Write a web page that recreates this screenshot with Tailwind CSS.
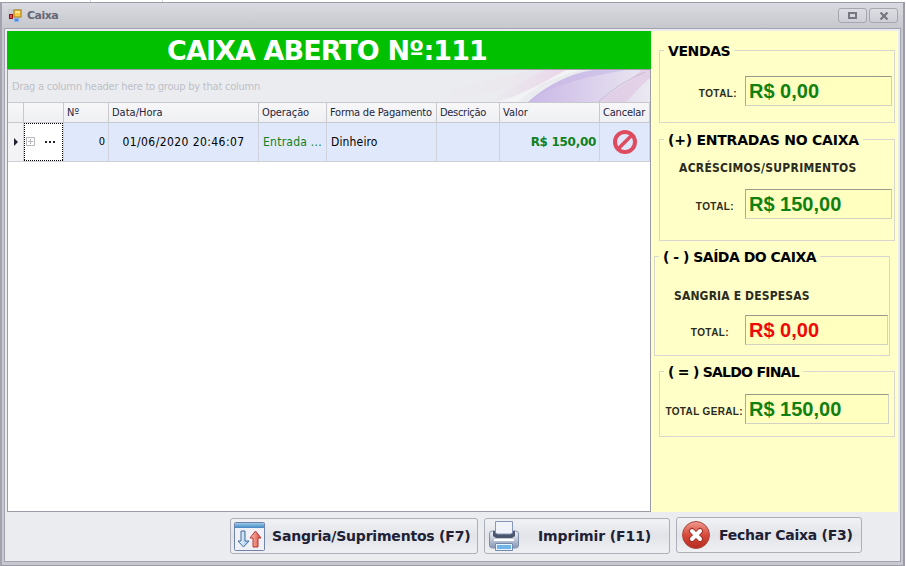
<!DOCTYPE html>
<html lang="pt-BR">
<head>
<meta charset="utf-8">
<title>Caixa</title>
<script src="https://cdn.jsdelivr.net/npm/@tailwindcss/browser@4"></script>
</head>
<body class="h-[566px] w-[906px] overflow-hidden bg-white font-['DejaVu_Sans_Condensed','DejaVu_Sans',sans-serif] whitespace-nowrap text-black">
<div class="flex h-[2px] w-full"><i class="ml-[90px] w-px bg-[#d4d8e4]"></i><i class="ml-[71px] w-px bg-[#d4d8e4]"></i></div>
<div class="flex h-[564px] w-[905px] flex-col border-2 border-t-[1px] border-b-[1px] border-[#9c9ca6] border-l-[#a3a3ad] bg-[#c8c8d0]">
  <!-- title bar -->
  <header class="flex h-[25px] shrink-0 items-center bg-linear-to-b from-[#dadbe0] to-[#c7c8ce] pl-[6px]">
    <svg class="h-[14px] w-[14px]" viewBox="0 0 14 14"><rect width="14" height="14" fill="#c9cbd3"/><rect x="6" y="1" width="7" height="7" fill="#f7c948" stroke="#a67c12"/><path d="M7 2h5v2H7z" fill="#ffe995"/><rect x="1.500" y="5.500" width="3" height="4" fill="#e05050" stroke="#8e1717"/><rect x="6.500" y="9.500" width="4" height="3" fill="#4e87dd" stroke="#8bb0ec"/></svg>
    <h1 class="relative top-[1px] ml-[5px] font-['DejaVu_Sans',sans-serif] text-[11px] font-bold tracking-[-0.5px] text-[#666675]">Caixa</h1>
    <button class="ml-auto flex h-[15px] w-[29px] items-center justify-center rounded-[3px] border border-[#a5a6b0] bg-linear-to-b from-[#dddee3] to-[#cecfd6]"><span class="h-[7px] w-[9px] border-2 border-[#777783]"></span></button>
    <button class="mr-[5px] ml-[2px] flex h-[15px] w-[29px] items-center justify-center rounded-[3px] border border-[#a5a6b0] bg-linear-to-b from-[#dddee3] to-[#cecfd6]"><svg class="h-[8px] w-[10px]" viewBox="0 0 10 8"><path d="M1.500.5l7 7M8.500.5l-7 7" stroke="#777783" stroke-width="2.200"/></svg></button>
  </header>
  <main class="mr-[2px] ml-[2px] flex h-[534px] flex-col border border-[#a3a4b0] bg-[#ebecef]">
    <div class="mt-[2px] ml-[2px] flex h-[481px] w-[891px]">
      <section class="flex w-[644px] shrink-0 flex-col">
        <h2 class="flex h-[38px] items-center justify-center bg-[#00c000] pr-[4px] font-['DejaVu_Sans',sans-serif] text-[27px] font-bold text-white"><span class="relative top-[1px] tracking-[-0.9px]">CAIXA ABERTO Nº:111</span></h2>
        <div class="flex h-[443px] flex-col border border-[#9a9ba3] bg-white">
          <div class="relative flex h-[32px] shrink-0 items-center overflow-hidden bg-[#ebecef] pl-[4px]">
            <svg class="absolute top-0 right-0 h-[32px] w-[230px]" viewBox="0 0 230 32">
              <defs><linearGradient id="a"><stop stop-color="#ebecef"/><stop offset="1" stop-color="#ead6ea"/></linearGradient><linearGradient id="b" x1="0" x2="1"><stop stop-color="#c9b8e7"/><stop offset=".35" stop-color="#d5c8ea"/><stop offset="1" stop-color="#ebe9f1"/></linearGradient></defs>
              <path d="M30 32C90 16 140 7 166 0h-55L20 22z" fill="url(#a)" opacity=".4"/>
              <path d="M68 32C110 25 130 12 148 0h-23C105 10 85 20 68 32z" fill="url(#a)"/>
              <path d="M98 32C118 14 141 4 164 0h-18C129 9 109 22 78 32z" fill="#f2f3f5"/>
              <path d="M108 32C131 11 158 2 174 0h56v32z" fill="url(#b)"/>
              <path d="M108 32C132 15 160 8 206 0h-32C152 3 130 13 108 32z" fill="#c5b4e5" opacity=".55"/>
              <path d="M178 32C194 20 211 11 221 0h9v8c-12 9-18 20-25 24z" fill="#e1cce5" opacity=".8"/>
              <path d="M178 32Q200 12 225 2" fill="none" stroke="#b9aacb" stroke-width=".6"/>
            </svg>
            <span class="relative top-[1px] text-[11px] tracking-[-0.23px] text-[#bec0c8]">Drag a column header here to group by that column</span>
          </div>
          <div class="grid h-[21px] shrink-0 grid-cols-[16px_40px_45px_150px_68px_110px_63px_100px_50px] border-y border-[#c8c9ce] bg-linear-to-b from-[#f7f7f8] to-[#eff0f3] text-[11px] leading-[19px] text-[#25253f] [&>*]:border-r [&>*]:border-[#c8c9ce] [&>*]:pl-[3px]">
            <span></span><span></span><span>Nº</span><span>Data/Hora</span><span class="tracking-[-0.1px]">Operação</span><span class="tracking-[-0.2px]">Forma de Pagamento</span><span class="tracking-[-0.3px]">Descrição</span><span>Valor</span><span class="tracking-[-0.2px]">Cancelar</span>
          </div>
          <div class="grid h-[39px] shrink-0 grid-cols-[16px_40px_45px_150px_68px_110px_63px_100px_50px] border-b border-[#cfd0d5] bg-[#e0e9fb] text-[12px] leading-[38px] [&>*]:border-r [&>*]:border-[#d0d3dc]">
            <span class="flex items-center bg-[#f3f3f5] pl-[6px]"><svg class="h-[8px] w-[4px]" viewBox="0 0 4 8"><path d="M0 0l4 4-4 4z" fill="#222233"/></svg></span>
            <span class="flex items-center bg-white bg-clip-padding"><svg class="h-[38px] w-[39px]" viewBox="0 0 39 38"><path fill="#fff" d="M0 0h39v38H0z"/><path d="M0 .5h39M0 37.500h39M.5 0v38M38.500 0v38" fill="none" stroke="#000" stroke-dasharray="1 1"/><path d="M2.500 14.500h8v8h-8zM4 18.500h5M6.500 16v5" fill="none" stroke="#b8b9c0"/><path d="M21 18h2v2h-2zM25 18h2v2h-2zM29 18h2v2h-2z" fill="#222233"/></svg></span>
            <span class="pr-[3px] text-right text-[11px]">0</span>
            <span class="text-center tracking-[0.42px]">01/06/2020 20:46:07</span>
            <span class="pl-[4px] tracking-[0.25px] text-[#108020]">Entrada ...</span>
            <span class="pl-[4px] tracking-[0.15px]">Dinheiro</span>
            <span></span>
            <span class="pr-[3px] text-right font-['DejaVu_Sans',sans-serif] font-bold tracking-[-0.3px] text-[#108020]">R$ 150,00</span>
            <span class="flex items-center justify-center"><svg class="h-[24px] w-[24px]" viewBox="0 0 24 24"><path d="M5 19L19 5" stroke="#df4b5f" stroke-width="3.500"/><circle cx="12" cy="12" r="10" fill="none" stroke="#df4b5f" stroke-width="4"/></svg></span>
          </div>
        </div>
      </section>
      <!-- totals -->
      <aside class="flex h-[481px] w-[247px] flex-col bg-[#ffffc8] font-bold">
        <section class="mt-[19px] ml-[8px] flex h-[73px] w-[236px] flex-col border border-[#d7d7cf]">
          <h3 class="-mt-[10px] ml-[4px] h-[20px] w-fit bg-[#ffffc8] px-[4px] font-['DejaVu_Sans',sans-serif] text-[14px] leading-[20px] tracking-[-0.4px]">VENDAS</h3>
          <div class="mt-[15px] flex"><span class="w-[85px] pt-[10px] pr-[8px] text-right font-['Liberation_Sans',Arial,sans-serif] text-[10px] leading-[16px] tracking-[0.4px] text-[#2b2b20]">TOTAL:</span><output class="h-[30px] w-[147px] border border-[#d2d2c4] border-t-[#99998c] border-l-[#aaaa9b] bg-[#ffffc0] pl-[3px] font-['Liberation_Sans',Arial,sans-serif] text-[20px] leading-[29px] text-[#108010]">R$ 0,00</output></div>
        </section>
        <section class="mt-[16px] ml-[8px] flex h-[102px] w-[236px] flex-col border border-[#d7d7cf]">
          <h3 class="-mt-[10px] ml-[4px] h-[20px] w-fit bg-[#ffffc8] px-[4px] font-['DejaVu_Sans',sans-serif] text-[14px] leading-[20px] tracking-[-0.23px]">(+) ENTRADAS NO CAIXA</h3>
          <p class="mt-[8px] ml-[19px] h-[20px] text-[12px] leading-[20px] tracking-[0.27px] text-[#2b2b20]">ACRÉSCIMOS/SUPRIMENTOS</p>
          <div class="mt-[11px] flex"><span class="w-[85px] pt-[10px] pr-[11px] text-right font-['Liberation_Sans',Arial,sans-serif] text-[10px] leading-[16px] tracking-[0.4px] text-[#2b2b20]">TOTAL:</span><output class="h-[30px] w-[147px] border border-[#d2d2c4] border-t-[#99998c] border-l-[#aaaa9b] bg-[#ffffc0] pl-[3px] font-['Liberation_Sans',Arial,sans-serif] text-[20px] leading-[29px] text-[#108010]">R$ 150,00</output></div>
        </section>
        <section class="mt-[15px] ml-[3px] flex h-[100px] w-[236px] flex-col border border-[#d7d7cf]">
          <h3 class="-mt-[10px] ml-[4px] h-[20px] w-fit bg-[#ffffc8] px-[4px] font-['DejaVu_Sans',sans-serif] text-[14px] leading-[20px] tracking-[-0.5px]">( - ) SAÍDA DO CAIXA</h3>
          <p class="mt-[19px] ml-[19px] h-[20px] text-[12px] leading-[20px] tracking-[0.15px] text-[#2b2b20]">SANGRIA E DESPESAS</p>
          <div class="mt-[9px] flex"><span class="w-[90px] pt-[10px] pr-[16px] text-right font-['Liberation_Sans',Arial,sans-serif] text-[10px] leading-[16px] tracking-[0.4px] text-[#2b2b20]">TOTAL:</span><output class="h-[30px] w-[143px] border border-[#d2d2c4] border-t-[#99998c] border-l-[#aaaa9b] bg-[#ffffc0] pl-[3px] font-['Liberation_Sans',Arial,sans-serif] text-[20px] leading-[29px] text-[#ee0808]">R$ 0,00</output></div>
        </section>
        <section class="mt-[15px] ml-[8px] flex h-[66px] w-[236px] flex-col border border-[#d7d7cf]">
          <h3 class="-mt-[10px] ml-[4px] h-[20px] w-fit bg-[#ffffc8] px-[4px] font-['DejaVu_Sans',sans-serif] text-[14px] leading-[20px] tracking-[-0.75px]">( = ) SALDO FINAL</h3>
          <div class="mt-[12px] flex"><span class="w-[85px] pt-[10px] pr-[2px] text-right font-['Liberation_Sans',Arial,sans-serif] text-[10px] leading-[16px] tracking-[0.35px] text-[#2b2b20]">TOTAL GERAL:</span><output class="h-[30px] w-[144px] border border-[#d2d2c4] border-t-[#99998c] border-l-[#aaaa9b] bg-[#ffffc0] pl-[3px] font-['Liberation_Sans',Arial,sans-serif] text-[20px] leading-[29px] text-[#108010]">R$ 150,00</output></div>
        </section>
      </aside>
    </div>
    <footer class="mt-[5px] ml-[225px] flex items-start font-['DejaVu_Sans',sans-serif] text-[14px] font-bold text-[#202034]">
      <button class="mt-px flex h-[36px] w-[248px] items-center rounded-[3px] border border-[#adafb8] bg-linear-to-b from-[#f1f2f4] via-[#e2e4e9] to-[#eff0f3] pl-[2px]">
        <svg class="h-[32px] w-[34px]" viewBox="0 0 34 32"><defs><linearGradient id="c" x2="0" y2="1"><stop stop-color="#9ac9eb"/><stop offset="1" stop-color="#4388c3"/></linearGradient><linearGradient id="d"><stop stop-color="#fff"/><stop offset="1" stop-color="#91bfe9"/></linearGradient><linearGradient id="e"><stop stop-color="#ffc8be"/><stop offset="1" stop-color="#db4637"/></linearGradient></defs><rect x="1.500" y="2.500" width="30" height="28" rx="1" fill="#f0f1f7" stroke="#7184a8"/><path d="M2 3h29v5H2z" fill="url(#c)"/><path d="M8 11h4v10h4l-5.500 6L5 21h3z" fill="url(#d)" stroke="#42689f" stroke-linejoin="round"/><path d="M20 27v-9h-3l5.500-7 5.500 7h-3v9z" fill="url(#e)" stroke="#b43b35" stroke-linejoin="round"/></svg>
        <span class="ml-[5px] tracking-[-0.2px]">Sangria/Suprimentos (F7)</span>
      </button>
      <button class="mt-px ml-[6px] flex h-[36px] w-[186px] items-center rounded-[3px] border border-[#adafb8] bg-linear-to-b from-[#f1f2f4] via-[#e2e4e9] to-[#eff0f3] pl-[3px]">
        <svg class="h-[32px] w-[34px]" viewBox="0 0 34 32"><defs><linearGradient id="f" x2="0" y2="1"><stop stop-color="#f4f6fa"/><stop offset="1" stop-color="#8997b4"/></linearGradient></defs><rect x="1.500" y="11" width="29" height="17" rx="3" fill="url(#f)" stroke="#8290ae"/><path d="M5 11h22v5l-3 2H8l-3-2z" fill="#4b556e"/><path d="M7.500 1.500h17V13l-2 1h-13l-2-1z" fill="#f0f3fa" stroke="#8797b5"/><path d="M6 19h20v2H6z" fill="#fff"/><path d="M7.500 23.500h17v7h-17z" fill="#e8f4fd" stroke="#7289b0"/><path d="M9 25h14v4H9z" fill="#71b5e8"/></svg>
        <span class="ml-[16px] tracking-[-0.1px]">Imprimir (F11)</span>
      </button>
      <button class="ml-[6px] flex h-[36px] w-[186px] items-center rounded-[3px] border border-[#adafb8] bg-linear-to-b from-[#f1f2f4] via-[#e2e4e9] to-[#eff0f3] pl-[4px]">
        <svg class="h-[30px] w-[30px]" viewBox="0 0 30 30"><defs><linearGradient id="g" x2="0" y2="1"><stop stop-color="#ef9c91"/><stop offset=".5" stop-color="#d74a3a"/><stop offset="1" stop-color="#b52a20"/></linearGradient></defs><circle cx="15" cy="15" r="13.500" fill="url(#g)" stroke="#a94b44"/><path d="M11 11l8 8M19 11l-8 8" stroke="#9e3028" stroke-width="6" stroke-linecap="round"/><path d="M11 11l8 8M19 11l-8 8" stroke="#fff" stroke-width="4" stroke-linecap="round"/></svg>
        <span class="ml-[8px] tracking-[-0.25px]">Fechar Caixa (F3)</span>
      </button>
    </footer>
  </main>
</div>
</body>
</html>
